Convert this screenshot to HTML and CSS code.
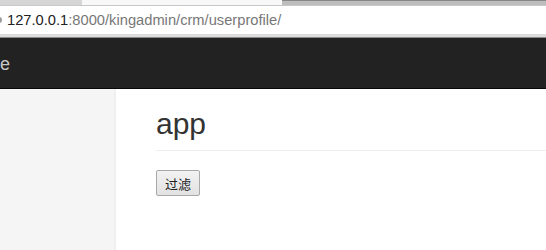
FILE: index.html
```html
<!DOCTYPE html>
<html lang="zh-CN">
<head>
    <meta charset="UTF-8">
    <title>userprofile</title>
    <link rel="stylesheet" href="styles.css">
</head>
<body>
    <div class="tabstrip">
        <div class="tab tab-left"></div>
        <div class="tab tab-mid"></div>
        <div class="tab tab-dark"></div>
    </div>
    <div class="addressbar">
        <span class="site-icon"></span>
        <span class="host">127.0.0.1</span><span class="path">:8000/kingadmin/crm/userprofile/</span>
    </div>
    <div class="chrome-edge"></div>

    <nav class="navbar">
        <span class="brand">e</span>
    </nav>

    <div class="layout">
        <aside class="sidebar"></aside>
        <main class="main">
            <div class="page-header">
                <h2>app</h2>
            </div>
            <button class="filter-btn">过滤</button>
        </main>
    </div>
</body>
</html>
```

FILE: styles.css
```css
html, body {
    margin: 0;
    height: 100%;
}

body {
    font-family: "Liberation Sans", Arial, sans-serif;
    color: #333;
    background: #fff;
    display: flex;
    flex-direction: column;
    overflow: hidden;
}

.tabstrip {
    height: 5px;
    display: flex;
    background: #f4f4f4;
    border-bottom: 1px solid #c8c8c8;
}

.tab-left {
    width: 82px;
    background: #d6d6d6;
}

.tab-mid {
    width: 200px;
    background: #f8f8f8;
}

.tab-dark {
    flex: 1;
    background: #bdbdbd;
    border-top: 1px solid #888;
}

.addressbar {
    height: 28px;
    display: flex;
    align-items: center;
    padding-left: 7px;
    font-size: 14.7px;
    background: #fff;
    position: relative;
}

.site-icon {
    position: absolute;
    left: -4px;
    top: 11px;
    width: 6px;
    height: 6px;
    border-radius: 50%;
    background: #9a9a9a;
}

.host {
    color: #222;
}

.path {
    color: #777;
}

.chrome-edge {
    height: 3px;
    background: #dcdcdc;
    border-bottom: 1px solid #8a8a8a;
}

.navbar {
    height: 50px;
    background: #222;
    border-bottom: 1px solid #080808;
    display: flex;
    align-items: center;
}

.brand {
    color: #c8c8c8;
    font-size: 18px;
    margin-top: 2px;
}

.layout {
    flex: 1;
    display: flex;
}

.sidebar {
    width: 114px;
    background: #f5f5f5;
    border-right: 2px solid #efefef;
}

.main {
    flex: 1;
    padding: 18px 0 0 40px;
}

.page-header {
    padding-bottom: 10px;
    border-bottom: 1px solid #eee;
    margin-bottom: 19px;
}

.page-header h2 {
    margin: 0;
    font-size: 30px;
    font-weight: 500;
    line-height: 1.1;
    color: #333;
}

.filter-btn {
    width: 44px;
    height: 26px;
    padding: 0;
    font-family: "Noto Sans CJK SC", sans-serif;
    font-size: 13px;
    color: #222;
    background: linear-gradient(#f2f2f2, #e2e2e2);
    border: 1px solid #a9a9a9;
    border-radius: 2px;
}
```
